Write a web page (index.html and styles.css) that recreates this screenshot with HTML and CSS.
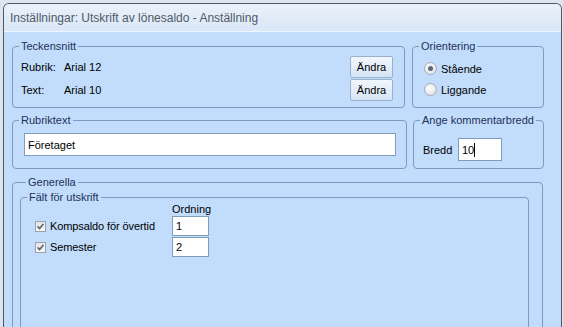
FILE: index.html
```html
<!DOCTYPE html>
<html lang="sv">

<head>
 <meta charset="UTF-8">
 <title>Inställningar: Utskrift av lönesaldo - Anställning</title>
 <link rel="stylesheet" href="styles.css">
</head>

<body>
 <div class="window">
  <div class="titlebar">Inställningar: Utskrift av lönesaldo - Anställning</div>
  <div class="content">

   <div class="row row-top">
    <fieldset class="box box-font">
     <legend>Teckensnitt</legend>
     <div class="inner font-rows">
      <div class="font-row">
       <span class="lbl">Rubrik:</span>
       <span class="val">Arial 12</span>
       <button class="btn">Ändra</button>
      </div>
      <div class="font-row">
       <span class="lbl">Text:</span>
       <span class="val">Arial 10</span>
       <button class="btn">Ändra</button>
      </div>
     </div>
    </fieldset>
    <fieldset class="box box-orient">
     <legend>Orientering</legend>
     <div class="inner radios">
      <label class="radio"><span class="dot checked"></span>Stående</label>
      <label class="radio"><span class="dot"></span>Liggande</label>
     </div>
    </fieldset>
   </div>

   <div class="row row-mid">
    <fieldset class="box box-title">
     <legend>Rubriktext</legend>
     <div class="inner">
      <div class="field field-wide">Företaget</div>
     </div>
    </fieldset>
    <fieldset class="box box-width">
     <legend>Ange kommentarbredd</legend>
     <div class="inner width-row">
      <span class="width-lbl">Bredd</span>
      <div class="field field-small">10<span class="caret"></span></div>
     </div>
    </fieldset>
   </div>

   <fieldset class="box box-general">
    <legend>Generella</legend>
    <fieldset class="box box-fields">
     <legend>Fält för utskrift</legend>
     <div class="fields-grid">
      <span></span>
      <span class="order-head">Ordning</span>
      <label class="check">
       <svg width="9" height="9" viewBox="0 0 9 9"><path d="M1.6 4.4 L3.6 6.6 L7.4 2" fill="none" stroke="#5b6470" stroke-width="1.6"/></svg>
       Kompsaldo för övertid
      </label>
      <div class="field field-order">1</div>
      <label class="check">
       <svg width="9" height="9" viewBox="0 0 9 9"><path d="M1.6 4.4 L3.6 6.6 L7.4 2" fill="none" stroke="#5b6470" stroke-width="1.6"/></svg>
       Semester
      </label>
      <div class="field field-order">2</div>
     </div>
    </fieldset>
   </fieldset>

  </div>
 </div>
</body>

</html>
```

FILE: styles.css
```css
body {
 margin: 0;
 padding: 3px 0 0 3px;
 height: 327px;
 box-sizing: border-box;
 overflow: hidden;
 background: #dfe5ec;
 font-family: "Liberation Sans", Arial, sans-serif;
 font-size: 11px;
 color: #000;
}

.window {
 width: 559px;
 height: 340px;
 box-sizing: border-box;
 border: 1px solid #4c5868;
 border-bottom: none;
 border-radius: 6px 6px 0 0;
 background: #c2dcfb;
 overflow: hidden;
}

.titlebar {
 height: 27px;
 line-height: 28px;
 padding-left: 6px;
 font-size: 12px;
 color: #505a66;
 background: linear-gradient(#eaf1fa, #d9e7f7);
 border-bottom: 1px solid #eef5fd;
}

.content {
 padding: 8px 0 0 8px;
}

.row {
 display: flex;
}

.box {
 margin: 0;
 padding: 0;
 min-width: 0;
 box-sizing: border-box;
 border: 1px solid #7b9bc0;
 border-radius: 4px;
}

.box legend {
 margin-left: 6px;
 padding: 0 2px;
 line-height: 13px;
 color: #1d315a;
}

.row-top .box {
 height: 68px;
}

.box-font {
 width: 393px;
}

.box-orient {
 width: 132px;
 margin-left: 7px;
}

.font-rows {
 padding: 3px 11px 0 8px;
}

.font-row {
 display: flex;
 align-items: center;
 height: 22px;
 margin-bottom: 1px;
}

.lbl {
 width: 43px;
}

.val {
 flex: 1;
}

.btn {
 width: 43px;
 height: 22px;
 padding: 0;
 font-family: inherit;
 font-size: 11px;
 color: #000;
 border: 1px solid #98b1cf;
 border-radius: 2px;
 background: linear-gradient(#f2f7fd, #d5e4f5);
}

.radios {
 padding: 5px 0 0 11px;
}

.radio {
 display: flex;
 align-items: center;
 height: 21px;
}

.dot {
 width: 11px;
 height: 11px;
 margin-right: 4px;
 border: 1px solid #a9adb3;
 border-radius: 50%;
 background: radial-gradient(circle at 40% 40%, #ffffff, #d6d9dd);
 position: relative;
}

.dot.checked::after {
 content: "";
 position: absolute;
 left: 3px;
 top: 3px;
 width: 5px;
 height: 5px;
 border-radius: 50%;
 background: #5f6875;
}

.row-mid {
 margin-top: 6px;
}

.row-mid .box {
 height: 55px;
}

.box-title {
 width: 395px;
}

.box-width {
 width: 131px;
 margin-left: 6px;
}

.field {
 box-sizing: border-box;
 background: #fff;
 border: 1px solid #7f9db9;
 padding-left: 3px;
 display: flex;
 align-items: center;
}

.box-title .inner {
 padding: 6px 0 0 11px;
}

.field-wide {
 width: 372px;
 height: 23px;
}

.width-row {
 display: flex;
 align-items: center;
 padding: 11px 0 0 9px;
}

.width-lbl {
 width: 35px;
}

.field-small {
 width: 44px;
 height: 23px;
}

.caret {
 width: 1px;
 height: 14px;
 background: #000;
}

.box-general {
 width: 531px;
 height: 170px;
 margin-top: 7px;
 padding: 2px 13px 0 7px;
}

.box-fields {
 height: 160px;
}

.fields-grid {
 display: grid;
 grid-template-columns: 137px 37px;
 grid-template-rows: 11px 20px 20px;
 row-gap: 1px;
 padding-left: 14px;
}

.fields-grid .order-head {
 align-self: end;
 line-height: 12px;
}

.check {
 display: flex;
 align-items: center;
 letter-spacing: -0.1px;
}

.check svg {
 margin-right: 4px;
 border: 1px solid #9ea3a9;
 background: linear-gradient(#e3e5e8, #f7f8f9);
}

.field-order {
 height: 20px;
}
```
